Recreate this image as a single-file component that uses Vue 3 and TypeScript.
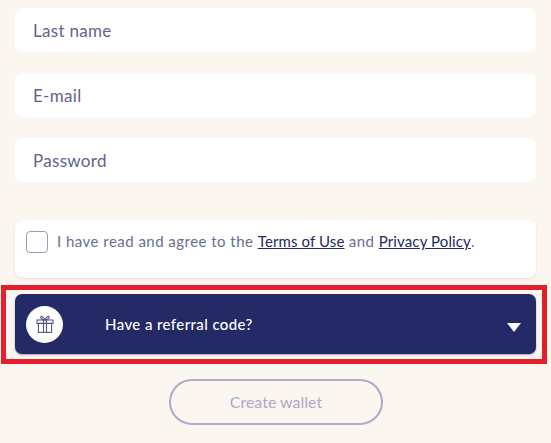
<script setup lang="ts">
const fields: string[] = ['Last name', 'E-mail', 'Password']
</script>

<template>
  <main class="page">
    <div class="fields">
      <div v-for="f in fields" :key="f" class="field">{{ f }}</div>
    </div>
    <section class="terms">
      <span class="box"></span>
      <p>I have read and agree to the <a>Terms of Use</a> and <a>Privacy Policy</a>.</p>
    </section>
    <div class="frame">
      <div class="referral">
        <span class="badge">
          <svg width="20" height="20" viewBox="0 0 20 20" fill="none" stroke="#55597f" stroke-width="1.1">
            <rect x="2" y="6" width="16" height="3.4" />
            <rect x="3.4" y="9.4" width="13.2" height="9" />
            <path d="M8.500 6v12.4M11.500 6v12.4" />
            <path d="M10 6C8.500 2.600 6.400 1.600 5.800 2.800 5.200 4.200 7 5.600 10 6ZM10 6c1.500-3.400 3.600-4.400 4.200-3.200C14.800 4.200 13 5.600 10 6Z" />
          </svg>
        </span>
        <span class="label">Have a referral code?</span>
        <span class="caret"></span>
      </div>
    </div>
    <button class="create" type="button">Create wallet</button>
  </main>
</template>

<style scoped>
.page {
  width: 551px;
  height: 443px;
  box-sizing: border-box;
  padding-top: 8px;
  background: #fbf6f0;
  font-family: Lato, "Open Sans", sans-serif;
  overflow: hidden;
}
.fields {
  display: flex;
  flex-direction: column;
  gap: 21px;
  margin: 0 15px;
}
.field {
  height: 44px;
  display: flex;
  align-items: center;
  padding-left: 18px;
  border-radius: 7px;
  background: #fff;
  color: #5f6390;
  font-size: 17px;
  letter-spacing: 0.3px;
}
.terms {
  display: flex;
  align-items: flex-start;
  gap: 9px;
  height: 58px;
  box-sizing: border-box;
  margin: 38px 15px 0;
  padding: 11px 11px 0;
  border-radius: 8px;
  background: #fff;
  box-shadow: 0 1px 2px rgba(60, 50, 40, 0.12);
}
.box {
  width: 22px;
  height: 22px;
  flex: none;
  box-sizing: border-box;
  border: 1px solid #9a9dbc;
  border-radius: 4px;
}
.terms p {
  margin: 0;
  color: #6a6d96;
  font-size: 15px;
  line-height: 21px;
  letter-spacing: 0.47px;
  white-space: nowrap;
}
.terms a {
  color: #23295f;
  letter-spacing: 0.12px;
  text-decoration: underline;
}
.frame {
  display: flex;
  height: 60px;
  margin: 7px 4px 0 1px;
  padding: 4px 6px 5px 9px;
  border: 5px solid #e3202b;
}
.referral {
  flex: 1;
  display: flex;
  align-items: center;
  padding: 0 15px 0 11px;
  border-radius: 7px;
  background: #232a66;
  box-shadow: 0 1px 2px rgba(40, 40, 80, 0.4);
}
.badge {
  width: 37px;
  height: 37px;
  flex: none;
  display: flex;
  align-items: center;
  justify-content: center;
  border-radius: 50%;
  background: #fff;
}
.label {
  margin-left: 42px;
  flex: 1;
  color: #fff;
  font-size: 15px;
  font-weight: 500;
  letter-spacing: 0.4px;
}
.caret {
  width: 0;
  height: 0;
  margin-top: 7px;
  border-left: 7.250px solid transparent;
  border-right: 7.250px solid transparent;
  border-top: 9px solid #fff;
}
.create {
  display: block;
  width: 214px;
  height: 46px;
  margin: 15px 0 0 169px;
  padding: 0 0 2px;
  box-sizing: border-box;
  border: 2px solid #adaaca;
  border-radius: 23px;
  background: transparent;
  color: #adaaca;
  font-family: inherit;
  font-size: 16px;
}
</style>
